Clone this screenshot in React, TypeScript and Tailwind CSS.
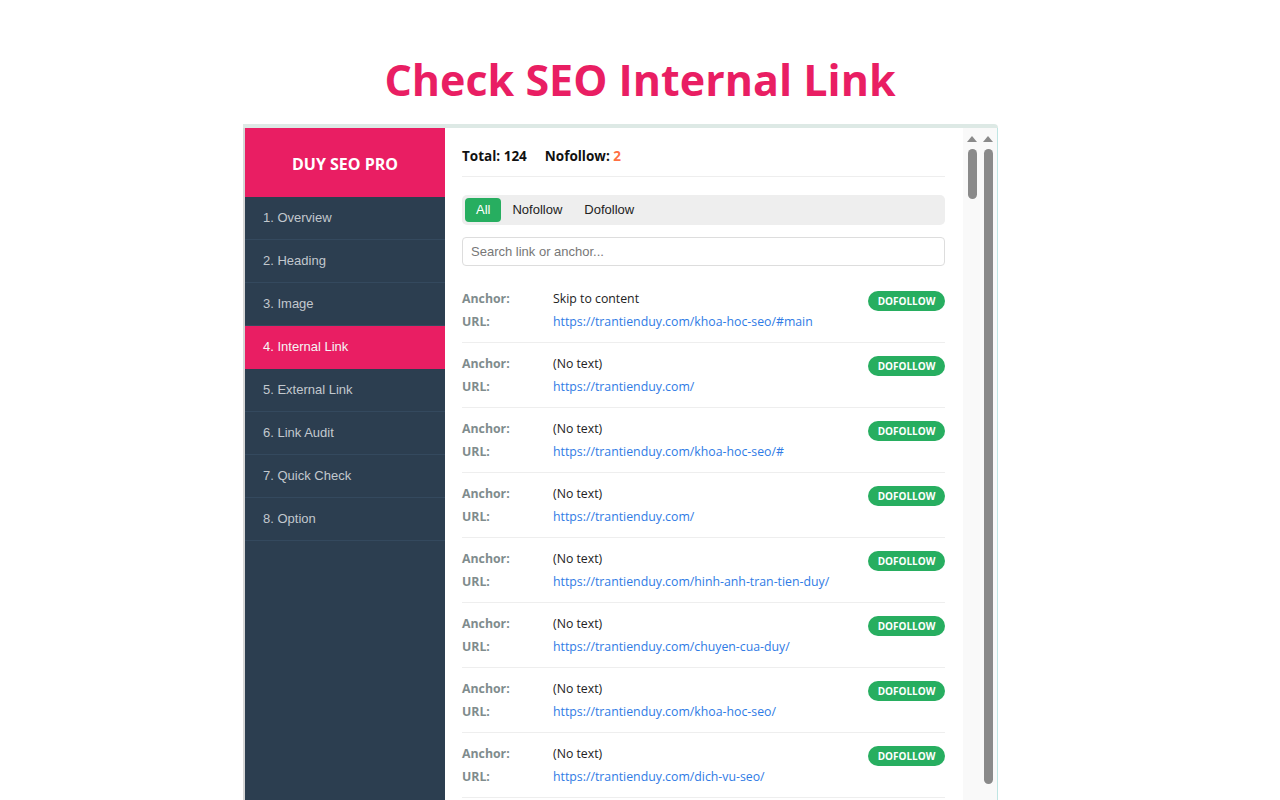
import React, { useState } from "react";

const menu = [
  "1. Overview",
  "2. Heading",
  "3. Image",
  "4. Internal Link",
  "5. External Link",
  "6. Link Audit",
  "7. Quick Check",
  "8. Option",
];

const links = [
  { anchor: "Skip to content", url: "https://trantienduy.com/khoa-hoc-seo/#main" },
  { anchor: "(No text)", url: "https://trantienduy.com/" },
  { anchor: "(No text)", url: "https://trantienduy.com/khoa-hoc-seo/#" },
  { anchor: "(No text)", url: "https://trantienduy.com/" },
  { anchor: "(No text)", url: "https://trantienduy.com/hinh-anh-tran-tien-duy/" },
  { anchor: "(No text)", url: "https://trantienduy.com/chuyen-cua-duy/" },
  { anchor: "(No text)", url: "https://trantienduy.com/khoa-hoc-seo/" },
  { anchor: "(No text)", url: "https://trantienduy.com/dich-vu-seo/" },
];

const segoe = { fontFamily: '"Open Sans", "Noto Sans", sans-serif' };
const arial = { fontFamily: '"Liberation Sans", Arial, sans-serif' };

const App: React.FC = () => {
  const [filter, setFilter] = useState("All");

  return (
    <div className="h-[800px] overflow-hidden bg-white">
      {/* Title */}
      <h1
        className="pt-[52px] text-center text-[43px] font-bold leading-[56px] text-[#e91e63]"
        style={segoe}
      >
        Check SEO Internal Link
      </h1>

      {/* Screenshot frame */}
      <div className="ml-[243px] mt-[16px] w-[755px]">
        <div className="h-[4px] rounded-tr-full bg-[#dde9e5]" />
        <div className="flex h-[680px] border-l-2 border-[#d6d6d6]">
          {/* Sidebar */}
          <div className="w-[200px] shrink-0 bg-[#2c3e50]" style={arial}>
            <div
              className="flex h-[69px] items-center justify-center bg-[#e91e63] pt-[2px] text-[16px] font-bold text-white"
              style={segoe}
            >
              DUY SEO PRO
            </div>
            {menu.map((m) => (
              <div
                key={m}
                className={
                  m === "4. Internal Link"
                    ? "flex h-[43px] items-center border-b border-[#e91e63] bg-[#e91e63] pl-[18px] text-[13px] text-[#f5f5f5]"
                    : "flex h-[43px] items-center border-b border-[#34495e] pl-[18px] text-[13px] text-[#c2c8ce]"
                }
              >
                {m}
              </div>
            ))}
          </div>

          {/* Content */}
          <div className="w-[518px] shrink-0 bg-white pl-[17px] pr-[18px]">
            <div
              className="flex gap-[18px] border-b border-[#eeeeee] pb-[10px] pt-[18px] text-[13.5px] font-bold leading-[20px] text-[#111]"
              style={segoe}
            >
              <span>Total: 124</span>
              <span>
                Nofollow: <span className="text-[#ff7043]">2</span>
              </span>
            </div>

            <div
              className="mt-[18px] flex h-[30px] items-center rounded-[5px] bg-[#eeeeee] px-[3px] text-[13px]"
              style={arial}
            >
              {["All", "Nofollow", "Dofollow"].map((f) => (
                <button
                  key={f}
                  onClick={() => setFilter(f)}
                  className={
                    filter === f
                      ? "h-[24px] rounded-[4px] bg-[#27ae60] px-[11px] text-white"
                      : "h-[24px] rounded-[4px] px-[11px] text-[#222]"
                  }
                >
                  {f}
                </button>
              ))}
            </div>

            <input
              className="mt-[12px] h-[29px] w-full rounded-[4px] border border-[#dddddd] px-[8px] text-[13px] outline-none placeholder:text-[#777]"
              style={arial}
              placeholder="Search link or anchor..."
            />

            <div className="mt-[12px]" style={segoe}>
              {links.map((l, i) => (
                <div key={i} className="flex border-b border-[#eeeeee] pb-[9px] pt-[10px] text-[12.3px]">
                  <div className="flex-1">
                    <div className="flex h-[22px] items-center">
                      <span className="w-[91px] font-bold text-[#7f8c8d]">Anchor:</span>
                      <span className="text-[#222]">{l.anchor}</span>
                    </div>
                    <div className="mt-[1px] flex h-[22px] items-center">
                      <span className="w-[91px] font-bold text-[#7f8c8d]">URL:</span>
                      <a className="text-[#2f7be5]">{l.url}</a>
                    </div>
                  </div>
                  <span className="mt-[3px] flex h-[20px] w-[77px] items-center justify-center self-start rounded-full bg-[#27ae60] text-[10px] font-bold text-white">
                    DOFOLLOW
                  </span>
                </div>
              ))}
            </div>
          </div>

          {/* Scrollbars */}
          <div className="flex w-[35px] shrink-0 gap-[6px] border-r border-[#bfe5e3] bg-[#f9f9f9] pl-[4px] pt-[8px]">
            <div className="flex w-[10px] flex-col items-center">
              <div className="h-0 w-0 border-x-[5px] border-b-[6px] border-x-transparent border-b-[#8a8a8a]" />
              <div className="mt-[7px] h-[50px] w-[9px] rounded-full bg-[#8a8a8a]" />
            </div>
            <div className="flex w-[10px] flex-col items-center">
              <div className="h-0 w-0 border-x-[5px] border-b-[6px] border-x-transparent border-b-[#8a8a8a]" />
              <div className="mt-[7px] h-[635px] w-[9px] rounded-full bg-[#8a8a8a]" />
            </div>
          </div>
        </div>
      </div>
    </div>
  );
};

export default App;
